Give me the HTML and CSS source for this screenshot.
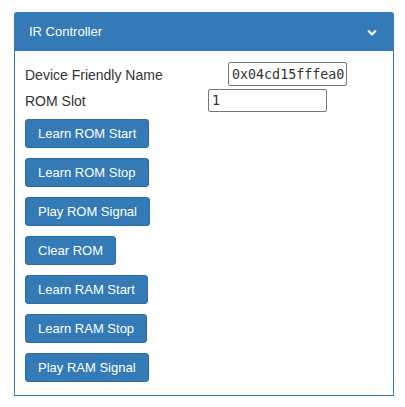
FILE: index.html
```
<!DOCTYPE html>
<html>
<head>
<meta charset="utf-8">
<link rel="stylesheet" href="styles.css">
</head>
<body>
<div class="wrap">
  <div class="panel">
    <div class="panel-heading">
      <span class="title">IR Controller</span>
      <svg class="chev" viewBox="0 0 1792 1792" width="10" height="10"><path fill="#fff" d="M1683 808l-742 741q-19 19-45 19t-45-19l-742-741q-19-19-19-45.5t19-45.5l166-165q19-19 45-19t45 19l531 531 531-531q19-19 45-19t45 19l166 165q19 19 19 45.5t-19 45.5z"/></svg>
    </div>
    <div class="panel-body">
      <div class="field field-name">
        <label class="label">Device Friendly Name</label>
        <input class="input" type="text" value="0x04cd15fffea0b1c2">
      </div>
      <div class="field field-slot">
        <label class="label">ROM Slot</label>
        <input class="input" type="text" value="1">
      </div>
      <div class="buttons">
        <button class="btn">Learn ROM Start</button>
        <button class="btn">Learn ROM Stop</button>
        <button class="btn">Play ROM Signal</button>
        <button class="btn">Clear ROM</button>
        <button class="btn">Learn RAM Start</button>
        <button class="btn">Learn RAM Stop</button>
        <button class="btn">Play RAM Signal</button>
      </div>
    </div>
  </div>
</div>
</body>
</html>
```
FILE: styles.css
```
html, body {
  margin: 0;
  padding: 0;
  background: #fff;
}
body {
  font-family: "Liberation Sans", Arial, sans-serif;
  color: #333;
}
.wrap {
  padding: 12px 11px 0 14px;
}
.panel {
  border: 1px solid #337ab7;
  border-top: none;
  border-radius: 4px 4px 0 0;
}
.panel-heading {
  background: #337ab7;
  color: #fff;
  height: 39px;
  margin: 0 -1px;
  padding: 0 17px 0 15px;
  display: flex;
  align-items: center;
  justify-content: space-between;
  border-radius: 3px 3px 0 0;
  font-size: 13px;
}
.title {
  line-height: 16px;
}
.chev {
  display: block;
  width: 10px;
  height: 10px;
}
.panel-body {
  padding: 11px 10px 13px 10px;
}
.field {
  display: flex;
  align-items: center;
  font-size: 14px;
}
.field-name .label {
  width: 203px;
  flex: none;
  padding-top: 1px;
}
.field-slot {
  margin-top: 3px;
}
.field-slot .label {
  width: 183px;
  flex: none;
}
.input {
  box-sizing: border-box;
  width: 119px;
  height: 24px;
  margin: 0;
  padding: 1px 2px 1px 3px;
  border: 1px solid #767676;
  border-radius: 2px;
  font-family: "DejaVu Sans Mono", monospace;
  font-size: 13.333px;
  color: #333;
  background: #fff;
}
.field-slot .input {
  height: 23px;
}
.buttons {
  display: flex;
  flex-direction: column;
  align-items: flex-start;
  gap: 10px;
  margin-top: 7px;
}
.btn {
  box-sizing: border-box;
  height: 29px;
  margin: 0;
  padding: 0 12px;
  font-family: "Liberation Sans", Arial, sans-serif;
  font-size: 13px;
  line-height: 27px;
  color: #fff;
  background: #337ab7;
  border: 1px solid #2e6da4;
  border-radius: 3px;
}
```
